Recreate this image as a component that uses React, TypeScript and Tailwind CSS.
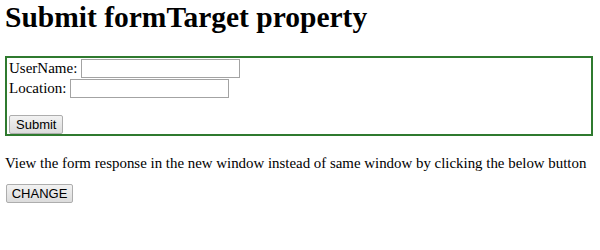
export default function App() {
  return (
    <div className="w-[600px] h-[250px] bg-white px-[5px] text-black font-['Liberation_Serif',serif] text-[15px]">
      <h1 className="text-[29.5px] leading-[34px] font-bold">Submit formTarget property</h1>

      <form className="mt-[22px] w-[588px] border-2 border-[#2f7a2f] px-[2px]">
        <div className="flex items-center h-[20px]">
          <span>UserName:</span>
          <input type="text" className="ml-[4px] w-[159px] h-[19px] border border-[#a3a3a3] bg-white" />
        </div>
        <div className="flex items-center h-[20px]">
          <span>Location:</span>
          <input type="text" className="ml-[4px] w-[159px] h-[19px] border border-[#a3a3a3] bg-white" />
        </div>
        <div className="h-[16px]" />
        <div className="h-[20px] flex items-center">
          <button
            type="button"
            className="h-[19px] w-[54px] px-[6px] font-['Liberation_Sans',sans-serif] text-[13px] leading-none border border-[#adadad] rounded-[2px] bg-gradient-to-b from-[#f2f2f2] to-[#dcdcdc]"
          >
            Submit
          </button>
        </div>
      </form>

      <p className="mt-[18px] leading-[18px] text-[14.9px]">
        View the form response in the new window instead of same window by clicking the below button
      </p>

      <button
        type="button"
        className="mt-[12px] ml-[1px] h-[19px] w-[67px] font-['Liberation_Sans',sans-serif] text-[13px] leading-none border border-[#adadad] rounded-[2px] bg-gradient-to-b from-[#f2f2f2] to-[#dcdcdc]"
      >
        CHANGE
      </button>
    </div>
  )
}
